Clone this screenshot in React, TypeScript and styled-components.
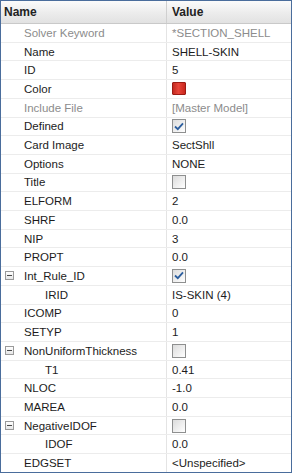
import React from "react";
import styled, { createGlobalStyle } from "styled-components";

type Row = {
  label: string;
  value?: string;
  kind?: "text" | "check" | "color";
  checked?: boolean;
  muted?: boolean;
  group?: boolean;
  child?: boolean;
};

const rows: Row[] = [
  { label: "Solver Keyword", value: "*SECTION_SHELL", muted: true },
  { label: "Name", value: "SHELL-SKIN" },
  { label: "ID", value: "5" },
  { label: "Color", kind: "color" },
  { label: "Include File", value: "[Master Model]", muted: true },
  { label: "Defined", kind: "check", checked: true },
  { label: "Card Image", value: "SectShll" },
  { label: "Options", value: "NONE" },
  { label: "Title", kind: "check" },
  { label: "ELFORM", value: "2" },
  { label: "SHRF", value: "0.0" },
  { label: "NIP", value: "3" },
  { label: "PROPT", value: "0.0" },
  { label: "Int_Rule_ID", kind: "check", checked: true, group: true },
  { label: "IRID", value: "IS-SKIN (4)", child: true },
  { label: "ICOMP", value: "0" },
  { label: "SETYP", value: "1" },
  { label: "NonUniformThickness", kind: "check", group: true },
  { label: "T1", value: "0.41", child: true },
  { label: "NLOC", value: "-1.0" },
  { label: "MAREA", value: "0.0" },
  { label: "NegativeIDOF", kind: "check", group: true },
  { label: "IDOF", value: "0.0", child: true },
  { label: "EDGSET", value: "<Unspecified>" },
];

const GlobalStyle = createGlobalStyle`
  html, body { margin: 0; padding: 0; background: #ffffff; }
  body { font-family: "Liberation Sans", Arial, sans-serif; }
`;

const Panel = styled.div`
  box-sizing: border-box;
  width: 292px;
  height: 473px;
  border: 1px solid #4a6d9c;
  background: #ffffff;
  display: flex;
  flex-direction: column;
  font-size: 11.5px;
  color: #1c1c1c;
`;

const Header = styled.div`
  display: grid;
  grid-template-columns: 166px 1fr;
  height: 22px;
  flex: none;
  background: linear-gradient(#fbfbfb, #ececec 55%, #e2e2e2);
  border-bottom: 1px solid #c9c9c9;
`;

const HeadCell = styled.div<{ $first?: boolean }>`
  display: flex;
  align-items: center;
  padding-left: ${(p) => (p.$first ? "3px" : "5px")};
  font-weight: bold;
  font-size: 12px;
  color: #222222;
  border-right: ${(p) => (p.$first ? "1px solid #d0d0d0" : "none")};
`;

const Body = styled.div`
  flex: 1;
  display: flex;
  flex-direction: column;
`;

const RowLine = styled.div`
  flex: 1;
  display: grid;
  grid-template-columns: 166px 1fr;
  border-bottom: 1px solid #ececec;
  &:last-child { border-bottom: none; }
`;

const NameCell = styled.div<{ $muted?: boolean; $child?: boolean }>`
  display: flex;
  align-items: center;
  padding-left: ${(p) => (p.$child ? "44px" : "23px")};
  position: relative;
  color: ${(p) => (p.$muted ? "#8c8c8c" : "#1c1c1c")};
  border-right: 1px solid #e4e4e4;
  white-space: nowrap;
`;

const ValueCell = styled.div<{ $muted?: boolean }>`
  display: flex;
  align-items: center;
  padding-left: 5px;
  color: ${(p) => (p.$muted ? "#8c8c8c" : "#1c1c1c")};
  white-space: nowrap;
`;

const Expander = styled.span`
  position: absolute;
  left: 4px;
  top: 50%;
  margin-top: -5px;
  box-sizing: border-box;
  width: 9px;
  height: 9px;
  border: 1px solid #9a9a9a;
  background: linear-gradient(#ffffff, #e6e6e6);
  &::after {
    content: "";
    position: absolute;
    left: 1px;
    right: 1px;
    top: 3px;
    height: 1px;
    background: #4a4a4a;
  }
`;

const Box = styled.span`
  box-sizing: border-box;
  width: 14px;
  height: 14px;
  border: 1px solid #8e8f8f;
  background: linear-gradient(135deg, #dcdcdc, #f4f4f4 70%, #ffffff);
  display: flex;
  align-items: center;
  justify-content: center;
`;

const Swatch = styled.span`
  box-sizing: border-box;
  width: 14px;
  height: 13px;
  border: 1px solid #9b1b14;
  border-radius: 1px;
  background: linear-gradient(90deg, #c22a20, #e8453a 45%, #c9271d);
`;

const Check = () => (
  <svg width="10" height="9" viewBox="0 0 10 9">
    <path d="M1 4.5 L3.8 7.2 L9 1.3" fill="none" stroke="#2c5e9e" strokeWidth="1.8" />
  </svg>
);

const Value = ({ row }: { row: Row }) => {
  if (row.kind === "check") return <Box>{row.checked && <Check />}</Box>;
  if (row.kind === "color") return <Swatch />;
  return <>{row.value}</>;
};

export default function App() {
  return (
    <>
      <GlobalStyle />
      <Panel>
        <Header>
          <HeadCell $first>Name</HeadCell>
          <HeadCell>Value</HeadCell>
        </Header>
        <Body>
          {rows.map((r) => (
            <RowLine key={r.label}>
              <NameCell $muted={r.muted} $child={r.child}>
                {r.group && <Expander />}
                {r.label}
              </NameCell>
              <ValueCell $muted={r.muted}>
                <Value row={r} />
              </ValueCell>
            </RowLine>
          ))}
        </Body>
      </Panel>
    </>
  );
}
